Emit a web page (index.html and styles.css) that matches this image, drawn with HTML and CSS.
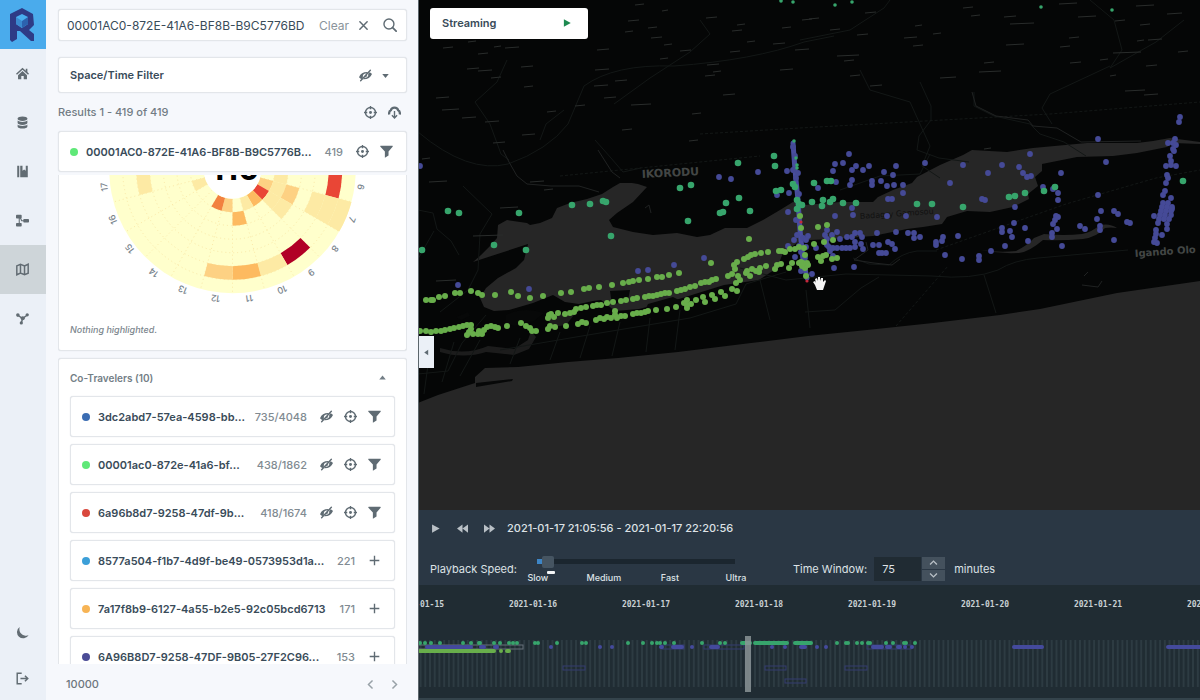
FILE: index.html
```html
<!DOCTYPE html>
<html lang="en">
<head>
  <meta charset="UTF-8" />
  <title>Device Explorer</title>
  <link rel="stylesheet" href="styles.css">
</head>
<body>

<!-- icon sprite -->
<svg class="sprite" aria-hidden="true">
  <symbol id="i-home" viewBox="0 0 16 16"><path d="M8 .8 0 8.2l1.2 1.3L8 3.3l6.8 6.2L16 8.2l-2-1.9V2h-2v2.500z"/><path d="M8 5 2.5 10v5H6.5v-4h3v4h4v-5z"/></symbol>
  <symbol id="i-db" viewBox="0 0 16 16"><path d="M8 .5c-3.3 0-6 1-6 2.3v1C2 5 4.700 6 8 6s6-1 6-2.200v-1C14 1.500 11.300.5 8 .5zM2 5.600v3C2 9.900 4.700 11 8 11s6-1.100 6-2.400v-3C13 6.700 10.500 7.300 8 7.300S3 6.700 2 5.600zM2 10.500v2.700c0 1.300 2.700 2.300 6 2.300s6-1 6-2.300v-2.700c-1 1.200-3.500 1.800-6 1.800s-5-.6-6-1.800z"/></symbol>
  <symbol id="i-book" viewBox="0 0 16 16"><path d="M1.500 1H4v14H1.500zM5.200 1H8v6l2-1.500L12 7V1h2.500v14H5.200z"/></symbol>
  <symbol id="i-flow" viewBox="0 0 16 16"><rect x="0" y="1" width="7" height="4.500" rx="1"/><rect x="0" y="11" width="7" height="4.500" rx="1"/><rect x="9" y="6" width="7" height="4.500" rx="1"/><path d="M4 5v6M5 4l2 4.200h3" fill="none" stroke="currentColor" stroke-width="1.300"/></symbol>
  <symbol id="i-map" viewBox="0 0 16 16"><path d="M1 3.500 5.500 1.500l5 2L15 1.500v11l-4.500 2-5-2L1 14.500zM5.500 1.500v11M10.500 3.500v11" fill="none" stroke="currentColor" stroke-width="1.800"/></symbol>
  <symbol id="i-graph" viewBox="0 0 16 16"><path d="m2.500 4 5.500 4 5.500-4M8 8l-1.500 6" fill="none" stroke="currentColor" stroke-width="1.800"/><circle cx="2.300" cy="3.800" r="2.200"/><circle cx="13.800" cy="3.500" r="2"/><circle cx="8.300" cy="7.800" r="2.500"/><circle cx="6.500" cy="13.500" r="2"/></symbol>
  <symbol id="i-moon" viewBox="0 0 16 16"><path d="M15.500 11.500A7.700 7.700 0 1 1 4.500 1.200c-1 4 .2 7 2.800 9 2.400 1.900 5.500 2.300 8.200 1.300z"/></symbol>
  <symbol id="i-logout" viewBox="0 0 16 16"><path d="M7 1.500H1.500v13H7M5.500 8h8M11 4.500 14.500 8 11 11.500" fill="none" stroke="currentColor" stroke-width="1.800"/></symbol>
  <symbol id="i-search" viewBox="0 0 16 16"><circle cx="6.800" cy="6.800" r="5.700" fill="none" stroke="currentColor" stroke-width="1.600"/><path d="m11 11 4 4" stroke="currentColor" stroke-width="2" stroke-linecap="round"/></symbol>
  <symbol id="i-cross" viewBox="0 0 16 16"><path d="m3.500 3.500 9 9m0-9-9 9" stroke="currentColor" stroke-width="1.800" stroke-linecap="round"/></symbol>
  <symbol id="i-eye-off" viewBox="0 0 16 16"><path d="M0 10C2 5.500 5.500 3.500 11 3.800L9.300 5.800C7 5 5 6.500 4.700 8.500c0 .8.1 1.200.3 1.700L3 12.500C1.800 11.500.8 10.900 0 10zM16 6c-2 4.700-5.500 6.800-11 6.500l1.700-2c2.300.8 4.400-.8 4.700-2.800 0-.8-.1-1.200-.3-1.700L13 4c1.300.5 2.200 1.100 3 2zM10 6.800C10.500 9 8.800 10.400 6.500 10z"/><path d="m2 14.500 12-13" stroke="currentColor" stroke-width="1.700" stroke-linecap="round"/></symbol>
  <symbol id="i-target" viewBox="0 0 16 16"><circle cx="8" cy="8" r="6.200" fill="none" stroke="currentColor" stroke-width="1.700"/><circle cx="8" cy="8" r="1.800"/><path d="M8 0v4M8 12v4M0 8h4M12 8h4" stroke="currentColor" stroke-width="1.700"/></symbol>
  <symbol id="i-filter" viewBox="0 0 16 16"><path d="M1 1h14c.7 0 .9.700.5 1.200L10.500 8v5L6 15.800V8L.5 2.200C.1 1.700.3 1 1 1z"/></symbol>
  <symbol id="i-cloud" viewBox="0 0 16 16"><path d="M1.500 10.500C1 7.500 2 6 3.500 5.300 4 3 5.800 2 8 2s4 1 4.500 3.300c1.500.7 2.500 2.200 2 5.200" fill="none" stroke="currentColor" stroke-width="2.800"/><path d="M8 6v8.500M4.800 11.500 8 14.700l3.200-3.200" fill="none" stroke="currentColor" stroke-width="1.700"/></symbol>
  <symbol id="i-plus" viewBox="0 0 16 16"><path d="M8 1v14M1 8h14" stroke="currentColor" stroke-width="2"/></symbol>
  <symbol id="i-left" viewBox="0 0 16 16"><path d="M10.500 3 5.500 8l5 5" fill="none" stroke="currentColor" stroke-width="1.800"/></symbol>
  <symbol id="i-right" viewBox="0 0 16 16"><path d="m5.500 3 5 5-5 5" fill="none" stroke="currentColor" stroke-width="1.800"/></symbol>
  <symbol id="i-down" viewBox="0 0 16 16"><path d="M4 6h8l-4 5z"/></symbol>
  <symbol id="i-up" viewBox="0 0 16 16"><path d="M4 10.500h8l-4-5z"/></symbol>
  <symbol id="i-play" viewBox="0 0 16 16"><path d="M3 2v12l11-6z"/></symbol>
  <symbol id="i-back" viewBox="0 0 16 16"><path d="M8 2v12L0 8zM16 2v12L8 8z"/></symbol>
  <symbol id="i-fwd" viewBox="0 0 16 16"><path d="M0 2v12l8-6zM8 2v12l8-6z"/></symbol>
</svg>

<div class="app">

  <nav class="sidebar" aria-label="Main">
    <a class="logo" href="#" aria-label="Start">
      <svg viewBox="0 0 46 49">
        <path fill="#2e3b86" d="M22 8l11 6 1 11-5 5 5 4v7h-3L20 31h-3v8l-5 3-2-2V14z"/>
        <path fill="#48aff0" d="M22 14l6 3v7l-6 4-6-4v-7z"/>
        <path fill="#2c62ae" d="M22 21l6-4v7l-6 4z"/>
        <path fill="#3b8bd0" d="M16 17l6 4v7l-6-4z"/>
      </svg>
    </a>
    <a class="nav-item" href="#" aria-label="Home"><svg><use href="#i-home"/></svg></a>
    <a class="nav-item" href="#" aria-label="Data"><svg><use href="#i-db"/></svg></a>
    <a class="nav-item" href="#" aria-label="Catalog"><svg><use href="#i-book"/></svg></a>
    <a class="nav-item" href="#" aria-label="Flows"><svg><use href="#i-flow"/></svg></a>
    <a class="nav-item active" href="#" aria-label="Map"><svg><use href="#i-map"/></svg></a>
    <a class="nav-item" href="#" aria-label="Graph"><svg><use href="#i-graph"/></svg></a>
    <a class="nav-item bottom" href="#" aria-label="Dark mode"><svg><use href="#i-moon"/></svg></a>
    <a class="nav-item last" href="#" aria-label="Log out"><svg><use href="#i-logout"/></svg></a>
  </nav>

  <section class="panel">
    <form class="search box">
      <input type="text" aria-label="Search" value="00001AC0-872E-41A6-BF8B-B9C5776BD">
      <button type="reset" class="clear">Clear <svg><use href="#i-cross"/></svg></button>
      <button type="button" aria-label="Search"><svg class="big"><use href="#i-search"/></svg></button>
    </form>

    <div class="filter box">
      <strong>Space/Time Filter</strong>
      <button type="button" aria-label="Hide filter"><svg><use href="#i-eye-off"/></svg></button>
      <button type="button" aria-label="Expand"><svg><use href="#i-down"/></svg></button>
    </div>

    <div class="results">
      <span class="grow">Results 1 - 419 of 419</span>
      <button type="button" aria-label="Locate"><svg><use href="#i-target"/></svg></button>
      <button type="button" aria-label="Download"><svg><use href="#i-cloud"/></svg></button>
    </div>

    <div class="entity box">
      <i class="dot lime"></i>
      <strong>00001AC0-872E-41A6-BF8B-B9C5776B...</strong>
      <span>419</span>
      <button type="button" aria-label="Locate"><svg><use href="#i-target"/></svg></button>
      <button type="button" aria-label="Filter"><svg><use href="#i-filter"/></svg></button>
    </div>

    <div class="scroll">
      <div class="chart-card">
        <svg class="chart" id="chart" viewBox="96 175 274 134" role="img" aria-label="Activity by hour"></svg>
        <em>Nothing highlighted.</em>
      </div>

      <div class="travelers">
        <button type="button" class="travelers-head">Co-Travelers (10) <svg><use href="#i-up"/></svg></button>

        <div class="row">
          <i class="dot blue"></i><strong>3dc2abd7-57ea-4598-bb...</strong><span>735/4048</span>
          <button type="button" aria-label="Hide"><svg><use href="#i-eye-off"/></svg></button>
          <button type="button" aria-label="Locate"><svg><use href="#i-target"/></svg></button>
          <button type="button" aria-label="Filter"><svg><use href="#i-filter"/></svg></button>
        </div>
        <div class="row">
          <i class="dot lime"></i><strong>00001ac0-872e-41a6-bf...</strong><span>438/1862</span>
          <button type="button" aria-label="Hide"><svg><use href="#i-eye-off"/></svg></button>
          <button type="button" aria-label="Locate"><svg><use href="#i-target"/></svg></button>
          <button type="button" aria-label="Filter"><svg><use href="#i-filter"/></svg></button>
        </div>
        <div class="row">
          <i class="dot red"></i><strong>6a96b8d7-9258-47df-9b...</strong><span>418/1674</span>
          <button type="button" aria-label="Hide"><svg><use href="#i-eye-off"/></svg></button>
          <button type="button" aria-label="Locate"><svg><use href="#i-target"/></svg></button>
          <button type="button" aria-label="Filter"><svg><use href="#i-filter"/></svg></button>
        </div>
        <div class="row">
          <i class="dot sky"></i><strong>8577a504-f1b7-4d9f-be49-0573953d1a...</strong><span>221</span>
          <button type="button" aria-label="Add"><svg class="small"><use href="#i-plus"/></svg></button>
        </div>
        <div class="row">
          <i class="dot orange"></i><strong>7a17f8b9-6127-4a55-b2e5-92c05bcd6713</strong><span>171</span>
          <button type="button" aria-label="Add"><svg class="small"><use href="#i-plus"/></svg></button>
        </div>
        <div class="row">
          <i class="dot indigo"></i><strong>6A96B8D7-9258-47DF-9B05-27F2C96...</strong><span>153</span>
          <button type="button" aria-label="Add"><svg class="small"><use href="#i-plus"/></svg></button>
        </div>
      </div>
    </div>

    <div class="pager">
      <span class="grow">10000</span>
      <button type="button" aria-label="Previous page"><svg><use href="#i-left"/></svg></button>
      <button type="button" aria-label="Next page"><svg><use href="#i-right"/></svg></button>
    </div>
  </section>

  <main class="stage">
    <div class="map">
      <svg class="map-canvas" viewBox="419 0 781 510" preserveAspectRatio="xMinYMid slice" role="img" aria-label="Map">
        <g class="water">
          <path d="M473 262l8-7 10-10 6-7 1-13 9-5 20 3 3 2 10-2 12-5 5-10 13-5 17-4 15-5 11-7 7-4 12 0 6 1 9 3-14 15-16 11-8 7 4 7 20 5 20 3 24-2 20 4 13-2 15-7h22l16-8 17-10 13-8 12 3 35-3h33l5-5 15-7 19-7 5-6 23-12 23-10 9-5 35 2 26-4 54-5h30l20 0 16-2 17-3 30 4v2l-27-1-6 4-30 6-24 3-36 1-35 7v7l-7 6 3 9-10 8 1 5-16 8-23 5-23-1-20 6-5 7-19 3-16 2-34 7-40 3-23 1-13 3-14 10-6 15-18 12-35 5-45 14-40 10-24 2-14-11-8 1-14 3-14-2-12-7-20 8-24 7-15 1-10-4-4-9 6-10 12-10 18-10 8-8 4-16z"/>
          <path d="M418 403l20-8 37-12v-6l10-9 33-1 50-5 50-4 60-6 73-9 57-7 59-6 66-7 67-8 40-6 77-16 83-12v230H418z"/>
          <path d="M980 250q20 3 36 1 12-6 18-13l10-4q20 2 38 0 10-2 18-9 10-2 17 3-6-1-12 0-8 9-22 11-22 2-40 1-14 12-24 13-20 1-39-3z"/>
          <path d="M548 320l16-7 10 2-8 10-14 2zM440 348q25 8 48-2l26 3 14-9 3-9 5 6-7 12-15 6-28-3q-22 7-46 0z" opacity=".7"/>
        </g>
        <g class="land">
          <path d="M610 291l20-1-2 10-16 5zM648 304l25-7 12 6-24 8-16-1zM456 317l12-5 2 4-9 4zM476 383l37-4-1 2-36 6zM506 315q14-7 30-4l8 2-10 8-20 5-8-3z"/>
        </g>
        <g class="roads">
          <path d="M418 132q50 42 90 32 40-14 60-40l16-38q30-22 90-20 80-6 130-24l30-6"/>
          <path d="M463 186l29 28-12 20-2 36-10 20-28 22M418 210l15 3 4 16 14 12 8 14M434 231l-16 28"/>
          <path d="M507 60l-10 22-22 20 15 22 11 30 8 6M540 140l6-16 18-14M595 140l16 18 12 14 18-4M700 20l10 14-20 18-40 26-36 26M840 190l40-14 40-2 10-20"/>
          <path d="M800 40l50-10 34-22 6-8M860 70l10 20 40 12 20 44-8 20 18 12M920 82l11 24 0 14-12 16-2 14 22 8 30 4M974 92l0 14 20 10 36 8 10 10 24 8 22 14M1110 66l-30 14-30 14-8 14 10 16M1090 0l24 20 8 30-12 18 46-26 28-22"/>
          <path d="M418 374l30-3 14-28 24-28M500 350l70-12 60-10 60-10 46-14 10-20 40-12M740 268l46 12 60-6 86 2q40 4 66-6 16-10 40-12l90-8M853 258l16 6 20 1q12-12 28-14l20 0M805 312l30-2 26-22 18-11M984 275l12 38M806 290l4 38"/>
          <path d="M430 350l-6 44M454 342l-12 40M480 340l-20 36M520 338l-10 26M560 332l-10 28M590 326l-10 32M620 322l-8 34M650 318l-4 34M680 310l-5 40M760 280l10 40"/>
        </g>
        <g class="roads dashed">
          <path d="M700 134l100-6 250-14 150-12M936 250l130-46 90-26 44-8M896 326l52-60M560 176l200-20"/>
        </g>
        <path class="coast" d="M598 150l14 22 8 6M503 150l6 12 8 14 10 8 24 2 28 0 20 6M972 92l4 14 20 10 32 4 5 6 24 2 24 14 60-1M645 208l4-3 2 8M1082 285l16 2 4-6M1084 276l4-4M866 242l2 8-14 10 20 3 18 2 8-6"/>
        <g id="labels" class="labels"></g>
        <text class="place" x="642" y="178" font-size="11" transform="rotate(-3 642 178)">IKORODU</text>
        <text class="place" x="1135" y="257" font-size="10" transform="rotate(-4 1135 257)">Igando Olo</text>
        <text class="place faint" x="860" y="219" font-size="8" transform="rotate(-4 860 219)">Badagry Gamosou</text>
        <path class="tower" d="M793 143l2 27 3 30 2 30 3 30 4 18"/>
        <g id="dots"></g>
        <path class="hand" d="M815 285l-2-3 2-1 1 2-1-4 2-1 1 3 0-4h2v4l1-3 2 0v4l2-2 1 1-2 6-1 3h-6z"/>
      </svg>

      <div class="streaming">
        <strong>Streaming</strong>
        <button type="button" aria-label="Start streaming"><svg><use href="#i-play"/></svg></button>
      </div>
      <button type="button" class="collapse" aria-label="Collapse panel"><svg viewBox="0 0 16 16"><path d="M11 3v10L4 8z"/></svg></button>
    </div>

    <div class="player">
      <div class="player-row">
        <button type="button" aria-label="Play"><svg><use href="#i-play"/></svg></button>
        <button type="button" aria-label="Rewind"><svg><use href="#i-back"/></svg></button>
        <button type="button" aria-label="Forward"><svg><use href="#i-fwd"/></svg></button>
        <span>2021-01-17 21:05:56 - 2021-01-17 22:20:56</span>
      </div>
      <div class="player-row settings">
        <label for="speed">Playback Speed:</label>
        <div class="speed">
          <input type="range" id="speed" min="0" max="100" value="3">
          <div class="marks"><span>Slow</span><span>Medium</span><span>Fast</span><span>Ultra</span></div>
          <i class="knob-label"></i>
        </div>
        <label for="window">Time Window:</label>
        <div class="stepper">
          <input type="text" id="window" value="75">
          <div class="steps">
            <button type="button" aria-label="Increase"><svg viewBox="0 0 16 16"><path d="M3 11l5-5 5 5"/></svg></button>
            <button type="button" aria-label="Decrease"><svg viewBox="0 0 16 16"><path d="M3 5l5 5 5-5"/></svg></button>
          </div>
        </div>
        <span>minutes</span>
      </div>
    </div>

    <svg class="timeline" id="timeline" viewBox="419 585 781 115" preserveAspectRatio="xMinYMin slice" role="img" aria-label="Timeline"></svg>
  </main>
</div>

<script>
  const NS = "http://www.w3.org/2000/svg";

  function add(parent, tag, attrs, text) {
    const el = document.createElementNS(NS, tag);
    for (const k in attrs) el.setAttribute(k, attrs[k]);
    if (text) el.textContent = text;
    parent.appendChild(el);
    return el;
  }

  // ---------- radial chart: 24 hours x 7 days ----------
  const CX = 232.5, CY = 170, R0 = 28.7, RING = 13.5;
  const LIGHT = "#fdeaa4", MID = "#fdd183", ORANGE = "#fdba60", RED = "#e94636";
  // [ring, hour, colour]
  const cells = [
    [5, 9, "#b10026"], [5, 10, LIGHT], [5, 11, ORANGE], [5, 12, MID],
    [5, 6, RED], [4, 7, LIGHT], [5, 7, LIGHT], [6, 7, LIGHT],
    [4, 17, LIGHT], [0, 16, LIGHT], [0, 7, MID], [1, 6, LIGHT],
    [0, 8, RED], [0, 9, ORANGE], [0, 10, LIGHT], [0, 12, MID], [0, 13, "#f2813f"],
    [1, 11, ORANGE], [1, 7, LIGHT], [2, 7, MID], [1, 8, LIGHT], [2, 8, LIGHT]
  ];

  function pt(r, deg) {
    const a = deg * Math.PI / 180;
    return (CX + r * Math.cos(a)).toFixed(1) + " " + (CY + r * Math.sin(a)).toFixed(1);
  }

  function drawChart() {
    const svg = document.getElementById("chart");
    const rMax = R0 + 7 * RING;
    add(svg, "circle", { cx: CX, cy: CY, r: rMax, fill: "#ffffcc" });
    for (let i = 1; i < 7; i++) add(svg, "circle", { cx: CX, cy: CY, r: R0 + i * RING, class: "grid" });
    for (let a = 0; a <= 180; a += 15) add(svg, "path", { class: "grid", d: `M${pt(R0, a)}L${pt(rMax, a)}` });
    cells.forEach(([ring, hour, fill]) => {
      const a = (hour - 6) * 15, b = a + 15, r = R0 + ring * RING, q = r + RING;
      add(svg, "path", { fill, d: `M${pt(r, a)}A${r} ${r} 0 0 1 ${pt(r, b)}L${pt(q, b)}A${q} ${q} 0 0 0 ${pt(q, a)}z` });
    });
    add(svg, "circle", { cx: CX, cy: CY, r: R0, fill: "#fff" });
    add(svg, "text", { x: 235, y: 180, class: "total" }, "110");
    for (let h = 6; h < 18; h++) {
      const a = (h - 6) * 15 + 7.5;
      const [x, y] = pt(rMax + 3, a).split(" ");
      add(svg, "text", { x, y, class: "hour", transform: `rotate(${a + 90} ${x} ${y})` }, String(h));
    }
  }

  // ---------- map ----------
  const teal = "448,211 459,213 519,213 572,205 590,204 603,201 606,202 611,236 494,245 526,250 422,250 680,188 691,185 738,163 774,156 775,166 776,191 781,190 739,198 726,203 750,211 720,213 723,212 688,221 814,183 827,181 831,181 812,202 823,200 833,199 830,202 822,206 843,203 856,203 917,204 932,204 963,207 1009,197 1015,196 1025,193 1044,191 1055,187 1183,181 793,184 795,187 797,200 799,204 802,205 797,209";
  const tealSmall = "781,1 793,2 835,5 852,2 1041,7 1112,10 794,141 796,158 797,168 797,165";
  const blue = "849,154 835,164 843,163 856,166 869,166 852,170 863,170 833,171 896,166 884,172 893,175 925,163 836,182 852,180 850,185 872,181 872,185 881,181 887,186 894,185 903,185 903,193 818,188 888,199 892,199 950,183 963,165 988,173 1002,165 1019,167 1023,173 1027,177 1031,176 1030,154 1061,173 1098,139 1106,162 1043,187 1053,189 1058,193 1058,200 982,199 985,200 1015,207 1098,195 852,208 853,215 835,216 887,216 906,216 937,217 1101,211 1097,219 1114,211 1118,214 1127,222 1130,223 1014,223 1025,228 1010,231 1012,237 1002,228 1002,232 1005,246 1028,241 991,251 1056,216 1058,217 1055,220 1053,224 1057,229 1052,233 1052,237 1062,246 1080,226 1085,229 1100,226 1100,230 1114,240 958,236 943,237 942,241 936,242 936,245 945,255 962,259 979,256 979,260 914,233 908,233 914,238 920,237 896,232 877,233 888,242 892,244 895,249 879,245 873,245 879,253 882,253 886,253 "
    + "827,230 825,235 832,235 837,232 840,239 827,239 847,237 852,237 855,233 860,233 862,237 855,242 861,244 863,249 855,247 850,248 846,248 842,248 837,248 833,248 829,247 827,245 830,251 826,243 834,268 854,267 812,274 816,248 833,256 "
    + "1180,117 1179,122 1175,139 1168,143 1173,143 1176,145 1173,149 1174,151 1170,156 1171,161 1166,166 1171,165 1176,166 1167,175 1168,178 1166,183 1165,191 1163,195 1171,198 1163,203 1168,203 1162,207 1167,207 1172,207 1161,211 1166,211 1171,211 1160,215 1165,215 1171,215 1159,219 1164,219 1169,219 1172,209 1154,216 1158,223 1167,224 1167,229 1162,235 1156,230 1156,234 1155,238 1154,242 1157,243 "
    + "420,166 719,177 731,179 758,172 787,171 789,193 777,195 788,212 788,246 704,258 795,257 458,285 529,289 638,271 648,270 674,265 "
    + "793,147 795,156 793,170 798,173 796,178 799,194 796,220 797,235 794,240 803,238 806,240 799,246 806,247 801,252 805,258 801,271 808,236";
  const lime = "426,300 431,300 433,300 439,297 445,296 455,293 460,293 471,291 478,293 482,295 495,295 511,292 518,296 530,298 543,296 561,293 571,292 584,289 589,288 599,287 612,285 623,283 629,282 633,281 639,280 648,279 657,277 662,277 669,275 679,273 711,263 749,239 "
    + "551,314 548,318 554,317 558,313 549,315 565,314 570,313 574,312 576,309 581,308 586,307 593,306 597,305 601,305 607,303 613,302 621,301 626,300 633,299 637,298 645,297 649,296 653,296 657,295 661,294 665,293 669,293 677,291 681,290 685,289 690,287 695,286 701,283 705,282 709,282 712,280 716,279 728,276 732,274 735,269 734,265 737,262 744,259 748,257 751,255 755,254 761,253 768,252 779,251 782,251 785,252 790,249 795,249 "
    + "420,331 426,331 431,332 436,331 441,331 445,330 450,329 454,328 459,327 463,326 467,325 471,325 471,329 467,335 469,332 473,334 478,334 482,334 479,331 484,330 487,327 491,326 495,327 498,328 507,326 521,323 526,326 530,328 532,331 536,331 548,329 550,326 555,327 566,326 578,324 582,322 586,323 596,320 600,318 604,319 607,317 611,318 615,311 615,315 617,318 621,316 625,316 633,314 637,313 641,313 645,312 648,311 656,310 667,309 676,307 684,303 687,300 687,305 691,304 687,308 696,300 703,297 705,302 712,295 715,299 721,292 725,296 732,289 737,291 736,283 740,280 738,276 746,273 750,276 747,271 752,269 756,271 760,268 759,272 766,266 775,269 777,265 781,264 789,268 792,263 799,263 "
    + "818,227 827,225 833,240 824,242 814,244 818,257 823,256 826,255 821,261 832,259 837,258 805,255 807,263 805,268 806,276 800,216 801,228 799,247 803,263 801,262 802,266 808,265 804,248";
  // tiny unreadable place names: x, y, length
  const names = "436,98,13 442,110,17 462,118,14 485,122,14 443,48,10 468,42,8 478,54,10 494,47,7 505,48,14 467,69,12 478,71,14 491,78,10 521,67,12 524,87,9 493,143,12 522,135,13 530,182,14 544,190,9 429,182,18 422,159,8 500,208,18 547,112,9 575,106,10 594,86,14 615,81,12 604,98,12 631,105,20 595,70,14 597,50,12 622,130,10 648,28,9 625,32,8 628,21,11 635,5,9 662,11,6 651,38,11 664,45,8 706,18,11 737,25,8 732,31,10 680,51,11 660,59,8 730,52,10 707,65,12 713,72,8 723,95,12 692,114,9 795,50,14 773,44,12 782,28,9 802,20,10 780,70,13 705,76,10 747,42,8 689,141,9 809,19,10 830,30,10 837,56,22 844,61,10 850,76,10 870,86,12 857,35,11 865,13,11 904,38,13 913,46,10 915,26,7 933,34,8 940,78,16 979,72,22 984,63,10 1006,45,18 1010,24,24 1004,17,12 971,16,9 963,8,10 1059,4,18 1078,17,18 1069,38,10 1060,47,10 1070,63,11 1100,60,8 1113,53,28 1148,40,14 1137,41,7 1115,21,10 1140,25,10 1136,6,18 1167,14,15 1178,52,10 1146,66,11 1125,91,20 1144,95,14 1110,76,6 984,149,7 473,236,30 436,281,20";

  function plot(list, r, fill) {
    const g = document.getElementById("dots");
    list.trim().split(" ").forEach(p => {
      const [cx, cy] = p.split(",");
      add(g, "circle", { cx, cy, r, fill });
    });
  }

  function drawMap() {
    plot(blue, 2.9, "#454a97");
    plot(lime, 3, "#68ae4b");
    plot(teal, 3.3, "#37a56c");
    plot(tealSmall, 1.8, "#37a56c");
    plot("801,222 807,281", 1.6, "#c4283c");
    const g = document.getElementById("labels");
    names.split(" ").forEach(n => {
      const [x, y, w] = n.split(",");
      add(g, "path", { d: `M${x} ${y}l${w} -1` });
    });
  }

  // ---------- timeline ----------
  function drawTimeline() {
    const svg = document.getElementById("timeline");
    for (let i = 0; i < 400; i++) {
      add(svg, "rect", { x: (419.6 + i * 4.71).toFixed(1), y: 640, width: 2, height: 47, fill: "#2d3b42" });
    }
    ["2021-01-15", "2021-01-16", "2021-01-17", "2021-01-18", "2021-01-19", "2021-01-20", "2021-01-21", "2021-01-22"].forEach((d, i) => {
      add(svg, "text", { x: 420 + i * 113, y: 607, class: "date" }, d);
    });
    [[563, 666, 22], [765, 666, 21], [785, 679, 21], [845, 666, 22], [704, 645, 40], [662, 645, 22], [867, 645, 44]].forEach(([x, y, width]) => {
      add(svg, "rect", { x, y, width, height: 4, fill: "none", stroke: "#343d70" });
    });
    add(svg, "rect", { x: 418, y: 645, width: 105, height: 4, fill: "none", stroke: "#66717a" });
    const line = (x1, x2, y, color) => add(svg, "path", { d: `M${x1} ${y}H${x2}`, stroke: color, "stroke-width": 4, "stroke-linecap": "round" });
    const G = "#37a56c", B = "#444a9c", L = "#68ae4b";
    [[427, 462], [465, 471], [481, 484], [495, 497], [551, 551], [600, 600], [612, 612], [661, 662], [673, 682], [692, 692], [711, 718], [772, 772], [785, 785], [801, 805], [817, 817], [826, 826], [873, 882], [887, 890], [898, 900], [905, 905], [912, 912], [1014, 1042], [1168, 1300]].forEach(s => line(s[0], s[1], 647, B));
    [420, 425, 431, 440, 463, 471, 479, 480, 494, 500, 509, 513, 517, 535, 538, 557, 582, 586, 628, 643, 652, 657, 660, 665, 674, 702, 720, 725, 837, 846, 848, 857, 862, 868, 870, 886, 893, 904, 906, 915].forEach(x => line(x, x, 643, G));
    [[742, 750], [755, 787], [795, 811]].forEach(s => line(s[0], s[1], 643, G));
    [[420, 494], [501, 501], [507, 509]].forEach(s => line(s[0], s[1], 651, L));
    add(svg, "rect", { x: 745, y: 636, width: 6, height: 56, fill: "#8b9497", opacity: .85 });
  }

  drawChart();
  drawMap();
  drawTimeline();
</script>

</body>
</html>
```
FILE: styles.css
```css
* {
  box-sizing: border-box;
}
body {
  margin: 0;
  font-family: Inter, "Liberation Sans", sans-serif;
  font-size: 11px;
  color: #394b59;
  background: #f6f8fc;
}
button, input {
  font: inherit;
  color: inherit;
}
button {
  background: none;
  border: none;
  padding: 0;
  display: flex;
  align-items: center;
  color: #5f6b73;
  cursor: pointer;
}
button svg, .nav-item svg {
  width: 13px;
  height: 13px;
  fill: currentColor;
  display: block;
}
button svg.big {
  width: 14px;
  height: 14px;
}
button svg.small {
  width: 11px;
  height: 11px;
  margin: 0 1px;
}
strong {
  font-weight: 600;
}
.sprite {
  display: none;
}
.grow {
  flex: 1;
}
.app {
  display: flex;
  height: 100vh;
}

/* Sidebar */
.sidebar {
  width: 46px;
  flex-shrink: 0;
  background: #ebf0f7;
  display: flex;
  flex-direction: column;
}
.logo, .nav-item {
  height: 49px;
}
.logo {
  background: #4aabec;
}
.logo svg {
  display: block;
  width: 46px;
  height: 49px;
}
.nav-item {
  display: flex;
  align-items: center;
  justify-content: center;
  color: #626c73;
  padding-right: 2px;
}
.nav-item.active {
  background: #ced5d9;
}
.nav-item.bottom {
  margin-top: auto;
}
.nav-item.last {
  height: 43px;
}

/* Left panel */
.panel {
  width: 372px;
  flex-shrink: 0;
  padding: 9px 11px 0 12px;
  display: flex;
  flex-direction: column;
}
.box, .row, .chart-card, .travelers {
  background: #fff;
  border: 1px solid #e3e6ea;
  border-radius: 3px;
  box-shadow: 0 0 1px #d3d8de;
}
.box {
  display: flex;
  align-items: center;
  flex-shrink: 0;
}
.search {
  height: 32px;
  padding: 0 9px 0 8px;
  font-size: 12px;
  gap: 14px;
}
.search input {
  flex: 1;
  min-width: 0;
  border: none;
  outline: none;
  padding: 0;
  background: none;
}
.search .clear {
  gap: 8px;
  margin-right: -1px;
  margin-left: -8px;
  color: #8a949b;
}
.clear svg {
  color: #5f6b73;
}
.filter {
  height: 36px;
  margin-top: 16px;
  padding: 0 14px 0 11px;
  gap: 7px;
}
.filter strong {
  flex: 1;
}
.results {
  display: flex;
  align-items: center;
  gap: 11px;
  height: 38px;
  padding-right: 6px;
  font-weight: 500;
  color: #727c84;
}
.entity {
  height: 41px;
  padding: 0 13px 0 11px;
}
.dot {
  width: 8px;
  height: 8px;
  border-radius: 50%;
  margin-right: 8px;
}
.lime { background: #5fe878; }
.blue { background: #3b6db3; }
.red { background: #d9483d; }
.sky { background: #3c9fd8; }
.orange { background: #f7b455; }
.indigo { background: #4b4c96; }
.entity strong, .row strong {
  flex: 1;
  white-space: nowrap;
}
.entity span, .row span {
  color: #818b92;
  font-weight: 500;
  margin-left: 8px;
}
.entity button, .row button {
  margin-left: 11px;
}
.entity span + button, .row span + button {
  margin-left: 13px;
}
.scroll {
  flex: 1;
  min-height: 0;
  overflow: hidden;
  margin-top: 3px;
}
.chart-card {
  border-top: none;
  border-radius: 0 0 3px 3px;
  padding: 0 11px 15px;
  height: 176px;
  display: flex;
  flex-direction: column;
  justify-content: space-between;
}
.chart-card em {
  font-size: 9px;
  font-weight: 500;
  color: #7c868d;
}
.chart {
  display: block;
  width: 274px;
  height: 134px;
  margin-left: 26px;
}
.chart .grid {
  fill: none;
  stroke: #fbe9a8;
  stroke-width: 1;
  stroke-dasharray: 1 3;
}
.chart .total {
  font-size: 32px;
  font-weight: 700;
  text-anchor: middle;
  fill: #000;
}
.chart .hour {
  font-size: 9px;
  font-weight: 500;
  text-anchor: middle;
  fill: #78838b;
}
.travelers {
  margin-top: 7px;
  padding: 0 11px 12px;
}
.travelers-head {
  width: 100%;
  height: 37px;
  justify-content: space-between;
  padding-right: 6px;
  font-size: 10px;
  font-weight: 600;
  color: #737e86;
}
.travelers-head svg {
  width: 13px;
  height: 13px;
}
.row {
  display: flex;
  align-items: center;
  height: 41px;
  margin-bottom: 7px;
  padding: 0 13px 0 11px;
}
.pager {
  display: flex;
  align-items: center;
  gap: 11px;
  height: 36px;
  padding: 4px 6px 0 8px;
  font-size: 11px;
  font-weight: 500;
  color: #6c767d;
}
.pager button {
  color: #98a1a7;
}

/* Map */
.stage {
  flex: 1;
  min-width: 0;
  display: flex;
  flex-direction: column;
  border-left: 1px solid #5c666c;
  background: #202c33;
}
.map {
  flex: 1;
  min-height: 0;
  position: relative;
  background: #050606;
  overflow: hidden;
}
.map-canvas {
  display: block;
  width: 100%;
  height: 100%;
}
.water { fill: #262626; }
.land { fill: #070808; }
.roads {
  fill: none;
  stroke: #131716;
}
.dashed { stroke-dasharray: 3 2; }
.coast {
  fill: none;
  stroke: #202222;
}
.labels {
  fill: none;
  stroke: #292c2b;
  stroke-width: 1;
}
.place {
  font-family: "DejaVu Sans", sans-serif;
  font-weight: bold;
  fill: #434645;
}
.place.faint {
  font-weight: normal;
  fill: #111;
}
.tower {
  fill: none;
  stroke: #494e9f;
  stroke-width: 5;
  stroke-linecap: round;
}
.hand {
  fill: #f4f4f4;
}
.streaming {
  position: absolute;
  left: 11px;
  top: 8px;
  width: 158px;
  height: 31px;
  padding: 0 16px 2px 12px;
  display: flex;
  align-items: center;
  justify-content: space-between;
  background: #fff;
  border-radius: 3px;
}
.streaming svg {
  width: 10px;
  height: 10px;
  color: #1d8a50;
}
.collapse {
  position: absolute;
  left: 0;
  top: 336px;
  width: 15px;
  height: 32px;
  justify-content: center;
  background: #ebf0f7;
}
.collapse svg {
  width: 9px;
  height: 9px;
}

/* Player */
.player {
  height: 75px;
  padding: 8px 11px 0;
  background: #2a3744;
  color: #dde2e6;
}
.player-row {
  display: flex;
  align-items: center;
  height: 20px;
  font-size: 11px;
  font-weight: 500;
}
.player-row button {
  color: #b9c0c6;
  margin-right: 16px;
}
.player-row button svg {
  width: 11px;
  height: 11px;
}
.player-row > button:nth-child(3) {
  margin-right: 12px;
}
.player .settings {
  height: 34px;
  margin-top: 14px;
  font-weight: 400;
}
.speed {
  position: relative;
  width: 264px;
  margin: 0 24px 0 -12px;
}
.speed input {
  appearance: none;
  display: block;
  width: 198px;
  height: 12px;
  margin: 0 0 4px 32px;
  background: linear-gradient(#3d85c6, #3d85c6) 0 50% / 8px 5px no-repeat,
    linear-gradient(#1b262f, #1b262f) 0 50% / 100% 5px no-repeat;
}
.speed input::-webkit-slider-thumb {
  appearance: none;
  width: 12px;
  height: 12px;
  border-radius: 2px;
  background: #465562;
}
.marks {
  display: grid;
  grid-template-columns: repeat(4, 1fr);
  text-align: center;
  font-size: 9px;
  font-weight: 500;
}
.knob-label {
  position: absolute;
  left: 42px;
  top: 15px;
  width: 8px;
  height: 3px;
  border-radius: 1px;
  background: #f2f4f5;
}
.stepper {
  display: flex;
  gap: 1px;
  width: 71px;
  height: 24px;
  margin: 0 9px 0 7px;
}
.stepper input {
  flex: 1;
  min-width: 0;
  border: none;
  padding: 0 8px;
  background: #202b33;
}
.steps {
  display: grid;
  gap: 1px;
}
.player-row .steps button {
  width: 23px;
  justify-content: center;
  margin: 0;
  background: #44515d;
}
.steps svg path {
  fill: none;
  stroke: currentColor;
  stroke-width: 2;
}

/* Timeline */
.timeline {
  display: block;
  width: 100%;
  height: 115px;
  border-bottom: 2px solid #34434b;
}
.date {
  font-family: "DejaVu Sans Mono", monospace;
  font-size: 8px;
  font-weight: bold;
  text-anchor: middle;
  fill: #c9d0d3;
}
```
